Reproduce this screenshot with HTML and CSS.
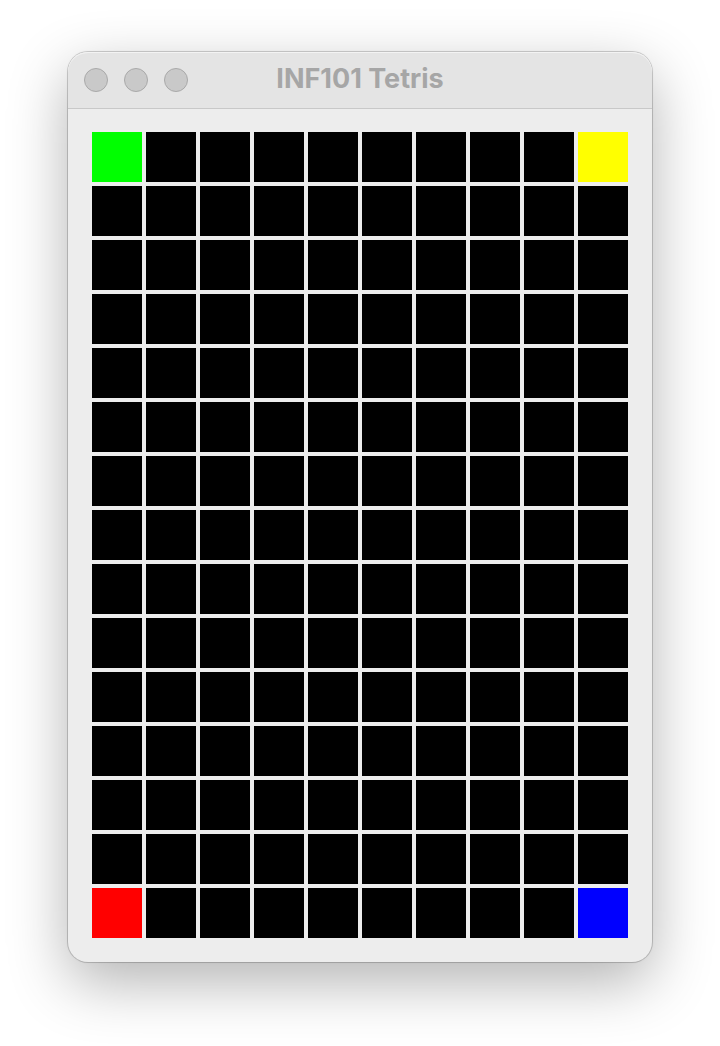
FILE: index.html
```html
<!DOCTYPE html>
<html lang="en">
<head>
<meta charset="utf-8">
<meta name="viewport" content="width=device-width, initial-scale=1">
<title>INF101 Tetris</title>
<link rel="stylesheet" href="styles.css">
</head>
<body>
<main class="window">
  <header class="titlebar">
    <div class="controls">
      <button class="control" type="button" aria-label="Close"></button>
      <button class="control" type="button" aria-label="Minimize"></button>
      <button class="control" type="button" aria-label="Zoom"></button>
    </div>
    <h1 class="title">INF101 Tetris</h1>
  </header>
  <div class="board" id="board" role="img" aria-label="Tetris board"></div>
</main>
<script src="board.js"></script>
</body>
</html>
```

FILE: styles.css
```css
* {
  box-sizing: border-box;
}

body {
  margin: 0;
  padding: 52px 68px 84px;
  background: #fff;
  font-family: Inter, "Liberation Sans", sans-serif;
}

.window {
  border-radius: 20px;
  background: #ededed;
  box-shadow:
    0 0 0 1px rgba(0, 0, 0, 0.16),
    0 0 3px rgba(0, 0, 0, 0.08),
    0 20px 60px rgba(0, 0, 0, 0.3);
}

.titlebar {
  display: grid;
  grid-template-columns: 1fr auto 1fr;
  align-items: center;
  height: 57px;
  padding: 0 16px;
  border-bottom: 1px solid #c8c8c8;
  border-radius: 20px 20px 0 0;
  background: #e4e4e4;
  box-shadow: inset 0 1px 0 #f3f3f3;
}

.controls {
  display: flex;
  gap: 16px;
}

.control {
  width: 24px;
  height: 24px;
  padding: 0;
  border: 1px solid #a9a9a9;
  border-radius: 50%;
  background: #c9c9c9;
}

.title {
  margin: 0;
  padding-bottom: 2px;
  color: #a6a6a6;
  font-size: 27px;
  font-weight: 700;
  line-height: 32px;
}

.board {
  display: grid;
  grid-template-columns: repeat(10, 1fr);
  gap: 4px;
  padding: 23px 24px 24px;
}

.cell {
  aspect-ratio: 1;
  background: #000;
}

.green {
  background: #0f0;
}

.yellow {
  background: #ff0;
}

.red {
  background: #f00;
}

.blue {
  background: #00f;
}
```

FILE: board.js
```js
const colors = { g: "green", y: "yellow", r: "red", b: "blue" };
const empty = "-".repeat(10);
const rows = ["g--------y", ...Array(13).fill(empty), "r--------b"];

const board = document.getElementById("board");
for (const symbol of rows.join("")) {
  const cell = document.createElement("div");
  cell.className = "cell";
  if (colors[symbol]) cell.classList.add(colors[symbol]);
  board.append(cell);
}
```
